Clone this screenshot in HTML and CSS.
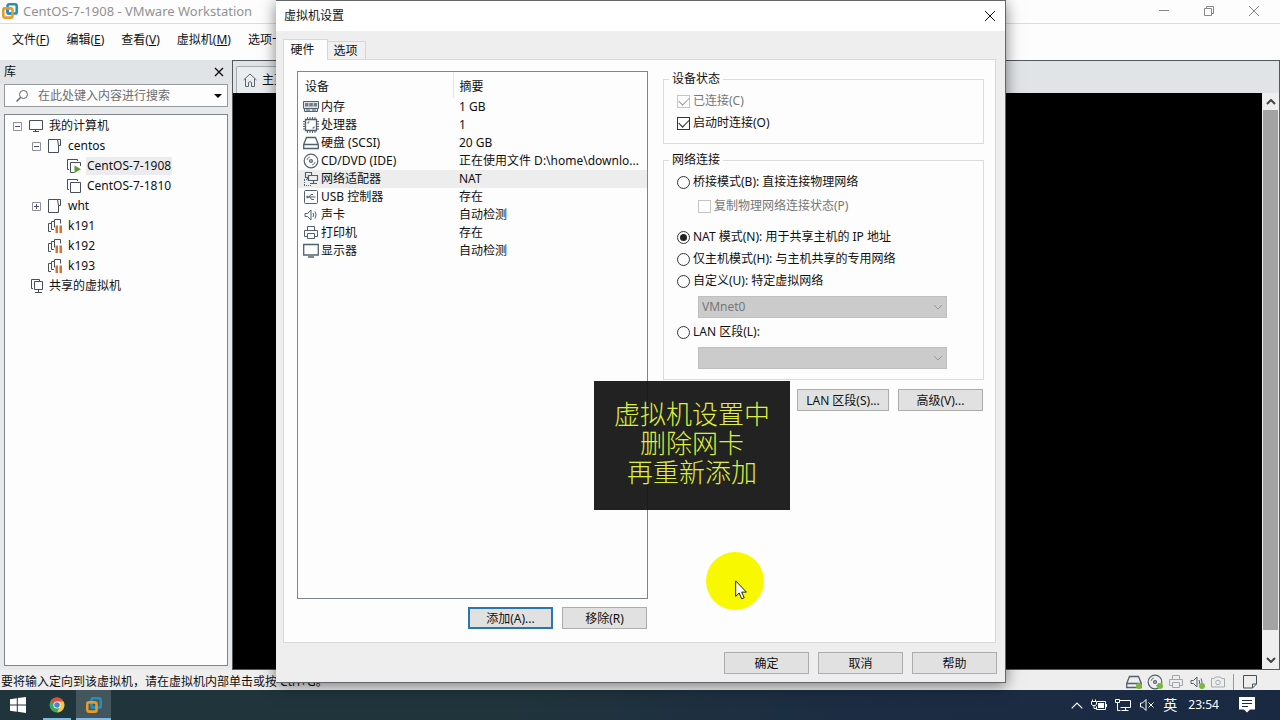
FILE: index.html
```html
<!DOCTYPE html>
<html lang="zh-CN">
<head>
<meta charset="utf-8">
<title>CentOS-7-1908 - VMware Workstation</title>
<link rel="stylesheet" href="styles.css">
</head>
<body>
<svg class="sprite" aria-hidden="true">
  <symbol id="vmware" viewBox="0 0 16 16"><g fill="none" stroke-width="2.6"><rect x="5.500" y="1.300" width="9.200" height="9.200" rx="1.600" stroke="#2a8db5"/><rect x="1.300" y="5.400" width="9.200" height="9.200" rx="1.600" stroke="#e79a2e"/><path d="M5.500 6.800v2q0 1.700 1.500 1.700h2" stroke="#2a8db5"/></g></symbol>
  <symbol id="vm" viewBox="0 0 14 14"><path d="M2 10.500H.5v-10h10V2M3.500 3.500h10v10h-10z" fill="none" stroke="#454f59"/></symbol>
  <symbol id="vm-on" viewBox="0 0 14 14"><path d="M2 10.500H.5v-10h10V2M13.500 7v-3.500h-10v10h4" fill="none" stroke="#454f59"/><path d="M7.500 6.500l6.500 3.800-6.500 3.700z" fill="#5b9c2f"/></symbol>
  <symbol id="folder" viewBox="0 0 14 14"><path d="M9.500.500h-9v13h10v-7M9.500.500h3v6h-2z" fill="none" stroke="#454f59"/></symbol>
  <symbol id="paused" viewBox="0 0 14 14"><path d="M3 12.500H.5v-8H3M6 10.500H3.500v-8H6M12.500 4.500v-4h-6v8" fill="none" stroke="#454f59"/><path d="M7.500 6.500h2.500v7.500H7.500zM11.500 6.500h2.500v7.500h-2.500z" fill="#d27338"/></symbol>
  <symbol id="screen" viewBox="0 0 16 14"><path d="M1.500 1.500h13v9h-13zM5 12.500h6M7.500 10.500v2" fill="none" stroke="#454f59"/></symbol>
  <symbol id="shared" viewBox="0 0 14 14"><path d="M3 9.500H1.500v-9h8V2M4.500 2.500h8v8h-8zM8.500 10.500v3M5 13.500h7" fill="none" stroke="#454f59"/></symbol>
  <symbol id="minus" viewBox="0 0 9 9"><path d="M.5.500h8v8h-8z" fill="#fff" stroke="#919191"/><path d="M2 4.500h5" stroke="#445077"/></symbol>
  <symbol id="plus" viewBox="0 0 9 9"><path d="M.5.500h8v8h-8z" fill="#fff" stroke="#919191"/><path d="M2 4.500h5M4.500 2v5" stroke="#445077"/></symbol>
  <symbol id="memory" viewBox="0 0 16 16"><path d="M.5 2.500h15v7H.5zM1.500 9.500v3h13v-3" fill="#dfe4e8" stroke="#53616e"/><path d="M2 4h3.500v3.500H2zM6.300 4h3.500v3.500H6.300zM10.600 4h3.500v3.500h-3.500z" fill="#71808c"/><path d="M3 11h4M9 11h4" stroke="#53616e"/></symbol>
  <symbol id="cpu" viewBox="0 0 16 16"><path d="M2.500 2.500h11v11h-11z" fill="none" stroke="#53616e" stroke-width="1.300"/><path d="M4.500 0v2.500M7 0v2.500M9.500 0v2.500M12 0v2.500M4.500 13.500V16M7 13.500V16M9.500 13.500V16M12 13.500V16M0 4.500h2.500M0 7h2.500M0 9.500h2.500M0 12h2.500M13.500 4.500H16M13.500 7H16M13.500 9.500H16M13.500 12H16" stroke="#53616e"/><path d="M5 6.500V5h1.500M11 9.500V11H9.500" fill="none" stroke="#53616e"/></symbol>
  <symbol id="disk" viewBox="0 0 16 16"><path d="M3.500 2.500h9l2.800 7v4H.7v-4zM.7 9.500h14.600" fill="none" stroke="#53616e" stroke-width="1.300"/></symbol>
  <symbol id="disc" viewBox="0 0 16 16"><circle cx="8" cy="8" r="6.800" fill="none" stroke="#53616e" stroke-width="1.200"/><circle cx="8" cy="8" r="2" fill="#53616e"/><circle cx="8" cy="8" r=".7" fill="#fff"/><path d="M4 7q.5-2.500 3-3M12 9q-.5 2.500-3 3" fill="none" stroke="#71808c"/></symbol>
  <symbol id="net" viewBox="0 0 16 16"><path d="M8.500 4V1.500h-6v5H5M4.500 6.500v2M5.500 4.500h9v5h-9zM10.500 9.500v3M7 12.500h7" fill="none" stroke="#53616e" stroke-width="1.200"/><path d="M1 8.500h4M1.500 9v6M1 14.500h7" fill="none" stroke="#53616e" stroke-dasharray="1 1"/></symbol>
  <symbol id="usb" viewBox="0 0 16 16"><rect x="1.500" y="1.500" width="13" height="13" rx="1" fill="none" stroke="#53616e"/><path d="M4 8h8.500M6 8l2-2.500h2M7 8l1.500 2.500H11" fill="none" stroke="#53616e"/><circle cx="4.500" cy="8" r="1.200" fill="#53616e"/></symbol>
  <symbol id="sound" viewBox="0 0 16 16"><path d="M2 6.500h2.500L8 3v10L4.500 9.500H2zM10 6q1.400 2 0 4M12 4.500q2.200 3.500 0 7" fill="none" stroke="#53616e"/></symbol>
  <symbol id="printer" viewBox="0 0 16 16"><path d="M4.500 5.500v-4h7v4M4 11.500H1.500v-6h13v6H12M4.500 8.500h7v5h-7z" fill="none" stroke="#53616e"/></symbol>
  <symbol id="display" viewBox="0 0 16 16"><path d="M.7 1.500h14.600v10.500H.7zM5 14h6" fill="none" stroke="#53616e" stroke-width="1.300"/></symbol>
  <symbol id="camera" viewBox="0 0 16 16"><path d="M1.500 4.500h3l1-1.500h5l1 1.500h3v8.500h-13z" fill="none" stroke="#a3abb0"/><circle cx="8" cy="8.500" r="2.300" fill="none" stroke="#a3abb0"/></symbol>
  <symbol id="note" viewBox="0 0 16 16"><path d="M1.500 1.500h13v8.500l-4 4h-9zM14.500 10h-4v4" fill="none" stroke="#454f59"/></symbol>
  <symbol id="chevron" viewBox="0 0 10 6"><path d="M1 1l4 4 4-4" fill="none" stroke="currentColor"/></symbol>
  <symbol id="close" viewBox="0 0 12 12"><path d="M1 1l10 10M11 1L1 11" fill="none" stroke="currentColor"/></symbol>
</svg>

<div class="desktop">
  <div class="app">
    <header class="titlebar">
      <svg class="logo"><use href="#vmware"/></svg>
      <span class="title">CentOS-7-1908 - VMware Workstation</span>
      <div class="winctl">
        <button aria-label="最小化"><svg viewBox="0 0 12 12"><path d="M1 5.500h10" stroke="currentColor"/></svg></button>
        <button aria-label="还原"><svg viewBox="0 0 12 12"><path d="M1.500 3.500h7v7h-7zM3.500 3V1.500h7v7H9" fill="none" stroke="currentColor"/></svg></button>
        <button aria-label="关闭"><svg><use href="#close"/></svg></button>
      </div>
    </header>
    <nav class="menubar">
      <button>文件(<u>F</u>)</button><button>编辑(<u>E</u>)</button><button>查看(<u>V</u>)</button><button>虚拟机(<u>M</u>)</button><button>选项卡(<u>T</u>)</button>
    </nav>
    <div class="workspace">
      <aside class="library">
        <div class="library-head"><span>库</span><button aria-label="关闭库"><svg viewBox="0 0 10 10"><path d="M1 1l8 8M9 1L1 9" stroke="#111" stroke-width="1.400"/></svg></button></div>
        <div class="search">
          <svg viewBox="0 0 14 14"><circle cx="8.500" cy="5.500" r="4" fill="none" stroke="#5d666e"/><path d="M5.500 8.500L1.500 12.500" stroke="#5d666e" stroke-width="1.400"/></svg>
          <input type="text" placeholder="在此处键入内容进行搜索" aria-label="搜索">
          <button aria-label="搜索选项"><svg viewBox="0 0 8 4"><path d="M0 0h8L4 4z"/></svg></button>
        </div>
        <ul class="tree">
          <li><svg class="toggle"><use href="#minus"/></svg><svg class="wide"><use href="#screen"/></svg><span>我的计算机</span></li>
          <li class="l1"><svg class="toggle"><use href="#minus"/></svg><svg><use href="#folder"/></svg><span>centos</span></li>
          <li class="l2"><svg><use href="#vm-on"/></svg><span class="current">CentOS-7-1908</span></li>
          <li class="l2"><svg><use href="#vm"/></svg><span>CentOS-7-1810</span></li>
          <li class="l1"><svg class="toggle"><use href="#plus"/></svg><svg><use href="#folder"/></svg><span>wht</span></li>
          <li class="leaf"><svg><use href="#paused"/></svg><span>k191</span></li>
          <li class="leaf"><svg><use href="#paused"/></svg><span>k192</span></li>
          <li class="leaf"><svg><use href="#paused"/></svg><span>k193</span></li>
          <li class="root"><svg><use href="#shared"/></svg><span>共享的虚拟机</span></li>
        </ul>
      </aside>
      <main class="console">
        <div class="tabstrip"><button class="home"><svg viewBox="0 0 14 14"><path d="M.5 7L7 1l6.500 6M2.500 5.500v8h3v-4q1.500-2 3 0v4h3v-8" fill="none" stroke="#5d666e"/></svg>主页</button></div>
        <div class="viewer">
          <div class="screen"></div>
          <div class="scrollbar"><svg class="up"><use href="#chevron"/></svg><div class="thumb"></div><svg><use href="#chevron"/></svg></div>
        </div>
      </main>
    </div>
    <footer class="status">
      <span class="hint">要将输入定向到该虚拟机，请在虚拟机内部单击或按 Ctrl+G。</span>
      <span class="device on"><svg><use href="#disk"/></svg></span>
      <span class="device on"><svg><use href="#disc"/></svg></span>
      <span class="device off"><svg><use href="#printer"/></svg></span>
      <span class="device on"><svg><use href="#sound"/></svg></span>
      <span class="device"><svg><use href="#camera"/></svg></span>
      <span class="device note"><svg><use href="#note"/></svg></span>
    </footer>
  </div>

  <div class="taskbar">
    <button class="start" aria-label="开始"><svg viewBox="0 0 16 16"><path d="M0 2.300l6.800-1v6.200H0zM7.800 1.100L16 0v7.500H7.800zM0 8.500h6.800v6.200L0 13.700zM7.800 8.500H16V16l-8.200-1.200z" fill="#fff"/></svg></button>
    <button class="task" aria-label="Chrome"><svg viewBox="0 0 16 16"><circle cx="8" cy="8" r="7.500" fill="#43a45a"/><path d="M8 8L1.500 4.200A7.500 7.500 0 0 1 14.500 4.500H8z" fill="#de5145"/><path d="M8 4.500h6.500A7.500 7.500 0 0 1 8 15.500L11 9.500z" fill="#f4c93e"/><circle cx="8" cy="8" r="3.600" fill="#fff"/><circle cx="8" cy="8" r="2.800" fill="#4a82d9"/></svg></button>
    <button class="task active" aria-label="VMware Workstation"><svg><use href="#vmware"/></svg></button>
    <div class="tray">
      <svg class="arrow" viewBox="0 0 12 7"><path d="M.7 6.300L6 1l5.300 5.300" fill="none" stroke="#fff" stroke-width="1.200"/></svg>
      <svg viewBox="0 0 16 16"><path d="M.5 4.500h5v2.500l-1 1.500h-3l-1-1.500zM1.500 2.500v2M4.500 2.500v2M3 8.500v3h2" fill="none" stroke="#fff"/><path d="M6 4.500h8.500v8H5.500v-3M15.500 7v3" fill="none" stroke="#fff"/><path d="M7 6h6v5H7z" fill="#fff"/></svg>
      <svg viewBox="0 0 16 16"><path d="M5 3.500h10.500v7h-10M10.500 10.500v3M6.500 13.500h7M.5 2.500h4v3h-4zM2.500 5.500v8h3" fill="none" stroke="#fff"/></svg>
      <svg viewBox="0 0 16 16"><path d="M1.500 6h2L7 2.500v11L3.500 10h-2zM9.500 5.500l5 5M14.500 5.500l-5 5" fill="none" stroke="#fff"/></svg>
      <span>英</span>
      <time>23:54</time>
      <svg class="notify" viewBox="0 0 16 16"><path d="M0 0h16v12.500h-5L8 15.500l-3-3H0z" fill="#fff"/><path d="M3 3.500h10M3 6.500h10M3 9.500h6" stroke="#1b2b40"/></svg>
    </div>
  </div>

  <section class="dialog" role="dialog" aria-labelledby="dlg-title">
    <header class="dialog-head"><span id="dlg-title">虚拟机设置</span><button aria-label="关闭"><svg><use href="#close"/></svg></button></header>
    <div class="tabs"><button class="tab selected">硬件</button><button class="tab">选项</button></div>
    <div class="pane">
      <div class="hardware">
        <div class="list">
          <table>
            <thead><tr><th>设备</th><th>摘要</th></tr></thead>
            <tbody>
              <tr><td><svg><use href="#memory"/></svg>内存</td><td>1 GB</td></tr>
              <tr><td><svg><use href="#cpu"/></svg>处理器</td><td>1</td></tr>
              <tr><td><svg><use href="#disk"/></svg>硬盘 (SCSI)</td><td>20 GB</td></tr>
              <tr><td><svg><use href="#disc"/></svg>CD/DVD (IDE)</td><td>正在使用文件 D:\home\downlo...</td></tr>
              <tr class="picked"><td><svg><use href="#net"/></svg>网络适配器</td><td>NAT</td></tr>
              <tr><td><svg><use href="#usb"/></svg>USB 控制器</td><td>存在</td></tr>
              <tr><td><svg><use href="#sound"/></svg>声卡</td><td>自动检测</td></tr>
              <tr><td><svg><use href="#printer"/></svg>打印机</td><td>存在</td></tr>
              <tr><td><svg><use href="#display"/></svg>显示器</td><td>自动检测</td></tr>
            </tbody>
          </table>
        </div>
        <div class="actions"><button class="btn default">添加(A)...</button><button class="btn">移除(R)</button></div>
      </div>
      <form class="settings">
        <fieldset>
          <legend>设备状态</legend>
          <label class="disabled"><input type="checkbox" checked disabled>已连接(C)</label>
          <label><input type="checkbox" checked>启动时连接(O)</label>
        </fieldset>
        <fieldset class="network">
          <legend>网络连接</legend>
          <label><input type="radio" name="net">桥接模式(B): 直接连接物理网络</label>
          <label class="disabled nested"><input type="checkbox" disabled>复制物理网络连接状态(P)</label>
          <label><input type="radio" name="net" checked>NAT 模式(N): 用于共享主机的 IP 地址</label>
          <label><input type="radio" name="net">仅主机模式(H): 与主机共享的专用网络</label>
          <label><input type="radio" name="net">自定义(U): 特定虚拟网络</label>
          <div class="combo"><select disabled aria-label="特定虚拟网络"><option>VMnet0</option></select><svg><use href="#chevron"/></svg></div>
          <label><input type="radio" name="net">LAN 区段(L):</label>
          <div class="combo"><select disabled aria-label="LAN 区段"><option></option></select><svg><use href="#chevron"/></svg></div>
        </fieldset>
        <div class="actions"><button type="button" class="btn lan">LAN 区段(S)...</button><button type="button" class="btn">高级(V)...</button></div>
      </form>
    </div>
    <footer class="actions dialog-foot"><button class="btn">确定</button><button class="btn">取消</button><button class="btn">帮助</button></footer>
  </section>

  <p class="caption">虚拟机设置中<br>删除网卡<br>再重新添加</p>
  <div class="pointer"><svg viewBox="0 0 12 20"><path d="M.7.900v15.500l3.500-3.400 2.500 5.800 2.500-1.100-2.500-5.600h4.700z" fill="#fff" stroke="#222"/></svg></div>
</div>
</body>
</html>
```
FILE: styles.css
```css
* { box-sizing: border-box; }
body {
  margin: 0;
  font: 12px/16px "Noto Sans", "Noto Sans CJK SC", sans-serif;
  color: #111;
}
button, input, select { font: inherit; color: inherit; }
button { padding: 0; border: 0; background: none; }
svg { flex: none; display: block; }
.sprite { position: absolute; width: 0; height: 0; }

.desktop { position: relative; height: 100vh; overflow: hidden; display: flex; flex-direction: column; }
.app { flex: 1; min-height: 0; display: flex; flex-direction: column; background: #e7e9eb; }

/* Main window */
.titlebar { display: flex; align-items: center; height: 24px; padding: 0 20px 2px 2px; background: #fdfdfd; border-bottom: 1px solid #dcdcdc; }
.logo { width: 16px; height: 16px; }
.title { flex: 1; margin-left: 5px; font-size: 13px; color: #929292; }
.winctl { display: flex; gap: 33px; color: #888; }
.winctl svg { width: 12px; height: 12px; }
.menubar { display: flex; gap: 17px; height: 36px; padding: 0 12px 4px; background: #fdfdfd; }
.workspace { flex: 1; min-height: 0; display: flex; }
.library { width: 232px; display: flex; flex-direction: column; padding: 0 4px 4px; }
.library-head { display: flex; justify-content: space-between; align-items: center; height: 24px; margin: 0 -4px; padding: 0 8px 0 4px; background: #e0e4e6; }
.library-head svg { width: 10px; height: 10px; }
.search { display: flex; align-items: center; height: 23px; margin-bottom: 7px; padding: 0 5px 0 10px; border: 1px solid #969a9d; background: #fdfdfd; }
.search svg { width: 14px; height: 14px; }
.search input { flex: 1; min-width: 0; padding: 0; margin-left: 9px; border: 0; background: none; }
.search input::placeholder { color: #6c6c6c; opacity: 1; }
.search button svg { width: 8px; height: 4px; }
.tree { flex: 1; margin: 0; padding: 1px 8px; list-style: none; border: 1px solid #7f868b; background: #fdfdfd; }
.tree li { display: flex; align-items: center; height: 20px; }
.tree svg { width: 14px; height: 14px; margin-right: 4px; }
.tree .toggle { width: 9px; height: 9px; margin-right: 6px; }
.tree .wide { width: 16px; }
.tree span { padding: 1px; }
.tree .l1 { padding-left: 19px; }
.tree .l1 svg:not(.toggle), .tree .leaf svg { margin-right: 5px; }
.tree .l1 .toggle { margin-right: 7px; }
.tree .l2 { padding-left: 54px; }
.tree .l2 svg { margin-right: 5px; }
.tree .leaf { padding-left: 35px; }
.tree .root { padding-left: 17px; }
.tree .current { background: #ececee; }

.console { flex: 1; display: flex; flex-direction: column; border: 1px solid #54585b; }
.tabstrip { display: flex; align-items: flex-end; height: 32px; padding-left: 3px; background: #e0e4e6; }
.home { display: flex; align-items: center; gap: 5px; width: 90px; height: 27px; padding-left: 6px; border: 1px solid #a8acaf; border-bottom: 0; border-radius: 2px 2px 0 0; background: #eaedef; }
.home svg { width: 14px; height: 14px; }
.viewer { flex: 1; display: flex; }
.screen { flex: 1; background: #000; }
.scrollbar { display: flex; flex-direction: column; width: 17px; padding: 6px 1px; background: #eee; color: #444; }
.scrollbar svg { width: 10px; height: 6px; margin: 0 3px; stroke-width: 2; }
.scrollbar .up { transform: rotate(180deg); margin-bottom: 5px; }
.thumb { flex: 1; margin-bottom: 27px; background: #a3a3a3; }

.status { display: flex; align-items: center; height: 20px; padding: 3px 22px 0 0; background: #eee; }
.hint { flex: 1; padding-left: 1px; white-space: nowrap; }
.device { position: relative; margin-left: 5px; }
.device svg { width: 16px; height: 16px; }
.off { opacity: .5; }
.on::after { content: ""; position: absolute; right: 0; bottom: 1px; width: 6px; height: 6px; border-radius: 50%; background: #78b83c; }
.note { margin-left: 7px; padding-left: 8px; border-left: 1px solid #999; }

/* Taskbar */
.taskbar { display: flex; height: 30px; padding-left: 2px; background: linear-gradient(90deg, #20343c 0 40%, #1c2d42 65%, #1a2942); color: #fff; }
.start { width: 32px; display: grid; place-items: center; margin-right: 7px; }
.start svg { width: 16px; height: 16px; }
.task { width: 32px; display: grid; place-items: center; margin-right: 3px; background: linear-gradient(#7bbbe8, #7bbbe8) center bottom / 28px 2px no-repeat; }
.task svg { width: 16px; height: 16px; }
.task.active { width: 35px; background-color: #43565e; background-size: 100% 2px; }
.tray { display: flex; align-items: center; gap: 8px; margin-left: auto; padding-right: 25px; }
.tray svg { width: 16px; height: 16px; }
.tray .arrow { width: 12px; height: 7px; }
.tray span { font-size: 14px; }
.tray time { margin: 0 12px 0 3px; }

/* Settings dialog */
.dialog {
  position: absolute; left: 276px; top: 0; width: 730px; padding-bottom: 8px;
  border: solid #66666a; border-width: 1px 1px 1px 0; background: #eee;
  box-shadow: 0 3px 14px rgba(0, 0, 0, .5);
}
.dialog-head { display: flex; align-items: center; justify-content: space-between; height: 30px; padding: 0 9px 0 8px; background: #fff; }
.dialog-head svg { width: 12px; height: 12px; }
.tabs { display: flex; align-items: flex-end; height: 28px; padding-left: 7px; }
.tab { width: 38px; height: 18px; padding-right: 2px; border: 1px solid #d6d6d6; border-width: 1px 1px 0 0; background: #f0f0f0; }
.tab.selected { position: relative; z-index: 1; width: 45px; height: 21px; margin-bottom: -1px; padding: 0 6px 1px 0; border-width: 1px; border-bottom: 0; background: #fdfdfd; }
.pane { display: flex; gap: 15px; margin: 0 9px 0 7px; padding: 11px 11px 13px 13px; border: 1px solid #d9d9d9; background: #fdfdfd; }
.hardware { width: 351px; display: flex; flex-direction: column; }
.list { min-height: 528px; border: 1px solid #7f868b; }
.list table { width: 100%; table-layout: fixed; border-collapse: collapse; }
.list th, .list td { height: 18px; padding: 0; font-weight: 400; text-align: left; white-space: nowrap; line-height: 18px; }
.list th { height: 26px; padding: 4px 0 0 7px; }
.list th:first-child { width: 155px; border-right: 1px solid #e5e5e5; }
.list td:last-child, .list th:last-child { padding-left: 6px; }
.list td:first-child { display: flex; align-items: center; padding-left: 5px; }
.list svg { width: 16px; height: 16px; margin-right: 2px; }
.picked { background: #ededed; }
.actions { display: flex; justify-content: flex-end; gap: 9px; margin-top: 8px; padding-right: 1px; }
.btn { width: 85px; height: 22px; padding-top: 1px; border: 1px solid #adadad; background: #e1e1e1; }
.btn.default { border: 2px solid #2878ae; }
.btn.lan { width: 92px; }
.dialog-foot { margin-top: 9px; padding-right: 8px; }

.settings { flex: 1; min-width: 0; }
fieldset { min-width: 0; margin: 0 0 8px; padding: 3px 13px 9px; border: 1px solid #dcdcdc; }
legend { margin-left: -8px; padding: 0 3px; }
label { display: flex; align-items: center; gap: 3px; height: 22px; white-space: nowrap; }
label.disabled { color: #777; }
label.nested { margin: 2px 0 9px 21px; }
.network { margin-bottom: 9px; padding-bottom: 10px; }
input[type="checkbox"], input[type="radio"] { appearance: none; display: grid; place-items: center; flex: none; width: 13px; height: 13px; margin: 0; border: 1px solid #333; background: #fff; }
input[type="radio"] { border-radius: 50%; }
input[type="radio"]:checked::before { content: ""; width: 7px; height: 7px; border-radius: 50%; background: #222; }
input[type="checkbox"]:checked::before { content: ""; width: 9px; height: 5px; border: solid #222; border-width: 0 0 1px 1px; transform: translateY(-1px) rotate(-45deg); }
input[type="checkbox"]:disabled { border-color: #c4c4c4; }
input[type="checkbox"]:disabled::before { border-color: #999; }
.combo { position: relative; width: 249px; margin: 4px 0 3px 21px; color: #777; }
.combo:last-child { margin-bottom: 0; }
.combo select { display: block; appearance: none; width: 100%; height: 22px; padding: 0 3px; border: 1px solid #bfbfbf; border-radius: 0; background: #cbcbcb; color: #777; opacity: 1; }
.combo svg { position: absolute; right: 4px; top: 8px; width: 10px; height: 6px; color: #999; }

/* Video overlays */
.caption { position: absolute; left: 594px; top: 381px; width: 196px; margin: 0; padding: 17px 0 25px; text-align: center; font: 300 26px/29px "Noto Sans CJK SC", sans-serif; color: #dff03a; background: rgba(20, 20, 20, .94); }
.pointer { position: absolute; left: 706px; top: 552px; width: 58px; height: 58px; padding: 28px 0 0 29px; border-radius: 50%; background: #f8f800; }
.pointer svg { width: 12px; height: 20px; }
```
